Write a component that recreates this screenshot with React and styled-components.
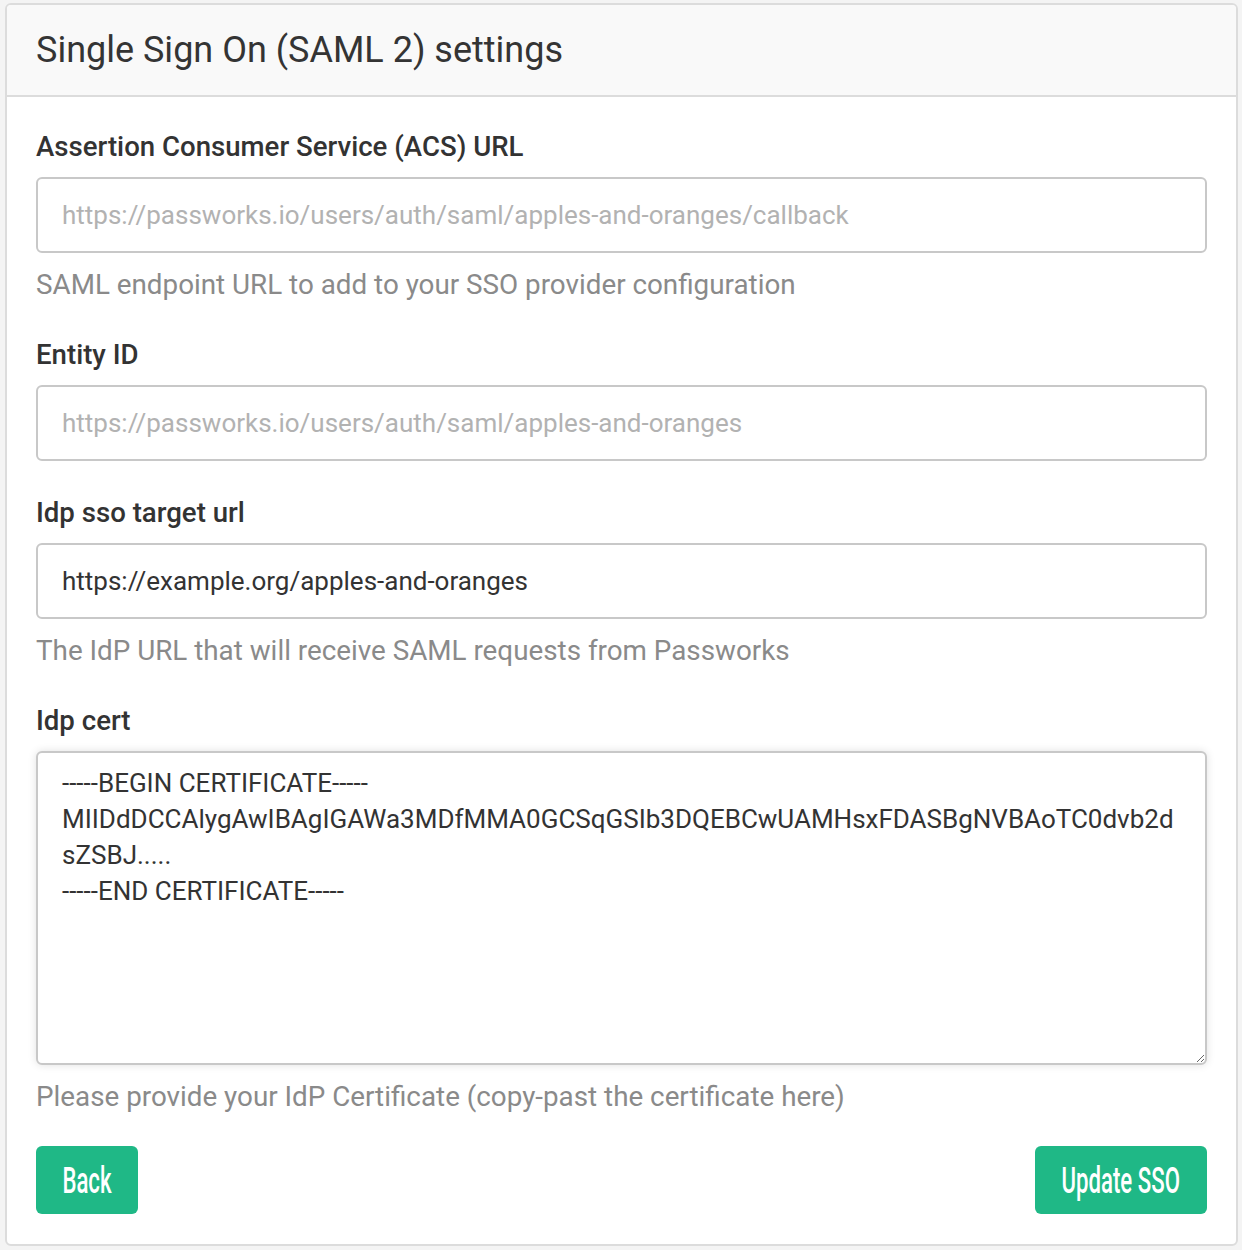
import React from 'react';
import styled, { createGlobalStyle } from 'styled-components';

const GlobalStyle = createGlobalStyle`
  body {
    margin: 0;
    padding: 3px 4px 4px 5px;
    background: #f4f4f4;
    font-family: Roboto, "Liberation Sans", sans-serif;
    color: #333;
  }
`;

const Card = styled.div`
  background: #fff;
  border: 2px solid #dcdcdc;
  border-radius: 6px;
  overflow: hidden;
`;

const CardHeader = styled.div`
  background: #f9f9f9;
  border-bottom: 2px solid #dcdcdc;
  height: 90px;
  display: flex;
  align-items: center;
  padding: 0 29px;
`;

const Title = styled.h1`
  margin: 0;
  font-size: 36px;
  font-weight: 400;
  color: #343434;
`;

const CardBody = styled.form`
  padding: 35px 29px 30px;
`;

const FormGroup = styled.div`
  margin-bottom: ${({ $mb }) => $mb ?? 40}px;
`;

const Label = styled.label`
  display: block;
  font-size: 27.6px;
  line-height: 30px;
  font-weight: 500;
  color: #333;
  margin-bottom: 15px;
`;

const Input = styled.input`
  display: block;
  box-sizing: border-box;
  width: 100%;
  height: 76px;
  border: 2px solid #c8c8c8;
  border-radius: 6px;
  padding: 0 24px;
  font-family: Roboto, "Liberation Sans", sans-serif;
  font-size: 26px;
  color: #333;
  background: #fff;
  outline: none;

  &::placeholder {
    color: #b2b2b2;
  }
`;

const TextArea = styled.textarea`
  display: block;
  box-sizing: border-box;
  width: 100%;
  height: 314px;
  border: 2px solid #c8c8c8;
  border-radius: 6px;
  padding: 12px 24px;
  font-family: Roboto, "Liberation Sans", sans-serif;
  font-size: 26px;
  line-height: 36px;
  color: #333;
  background: #fff;
  outline: none;
  box-shadow: 0 0 8px rgba(0, 0, 0, 0.12);
  resize: vertical;
`;

const Help = styled.p`
  margin: 17px 0 0;
  font-size: 27.8px;
  line-height: 30px;
  color: #8a8a8a;
`;

const Actions = styled.div`
  display: flex;
  justify-content: space-between;
  align-items: center;
`;

const Button = styled.button`
  width: ${({ $w }) => $w}px;
  height: 68px;
  padding: 0;
  border: none;
  border-radius: 6px;
  background: #1fb886;
  color: #fff;
  display: flex;
  align-items: center;
  justify-content: center;
  cursor: pointer;
`;

// narrow display face, squeezed from Roboto
const ButtonText = styled.span`
  display: inline-block;
  font-family: Roboto, "Liberation Sans", sans-serif;
  font-size: 37px;
  font-weight: 500;
  line-height: 1;
  white-space: nowrap;
  transform: scaleX(0.6);
`;

const certValue = `-----BEGIN CERTIFICATE-----
MIIDdDCCAlygAwIBAgIGAWa3MDfMMA0GCSqGSIb3DQEBCwUAMHsxFDASBgNVBAoTC0dvb2dsZSBJ.....
-----END CERTIFICATE-----`;

const App = () => {
  return (
    <>
      <GlobalStyle />
      <Card>
        <CardHeader>
          <Title>Single Sign On (SAML 2) settings</Title>
        </CardHeader>
        <CardBody onSubmit={(e) => e.preventDefault()}>
          <FormGroup>
            <Label>Assertion Consumer Service (ACS) URL</Label>
            <Input
              type="text"
              placeholder="https://passworks.io/users/auth/saml/apples-and-oranges/callback"
              readOnly
            />
            <Help>SAML endpoint URL to add to your SSO provider configuration</Help>
          </FormGroup>
          <FormGroup $mb={37}>
            <Label>Entity ID</Label>
            <Input
              type="text"
              placeholder="https://passworks.io/users/auth/saml/apples-and-oranges"
              readOnly
            />
          </FormGroup>
          <FormGroup>
            <Label>Idp sso target url</Label>
            <Input type="text" defaultValue="https://example.org/apples-and-oranges" />
            <Help>The IdP URL that will receive SAML requests from Passworks</Help>
          </FormGroup>
          <FormGroup $mb={34}>
            <Label>Idp cert</Label>
            <TextArea defaultValue={certValue} />
            <Help>Please provide your IdP Certificate (copy-past the certificate here)</Help>
          </FormGroup>
          <Actions>
            <Button type="button" $w={102}>
              <ButtonText>Back</ButtonText>
            </Button>
            <Button type="submit" $w={172}>
              <ButtonText>Update SSO</ButtonText>
            </Button>
          </Actions>
        </CardBody>
      </Card>
    </>
  );
};

export default App;
